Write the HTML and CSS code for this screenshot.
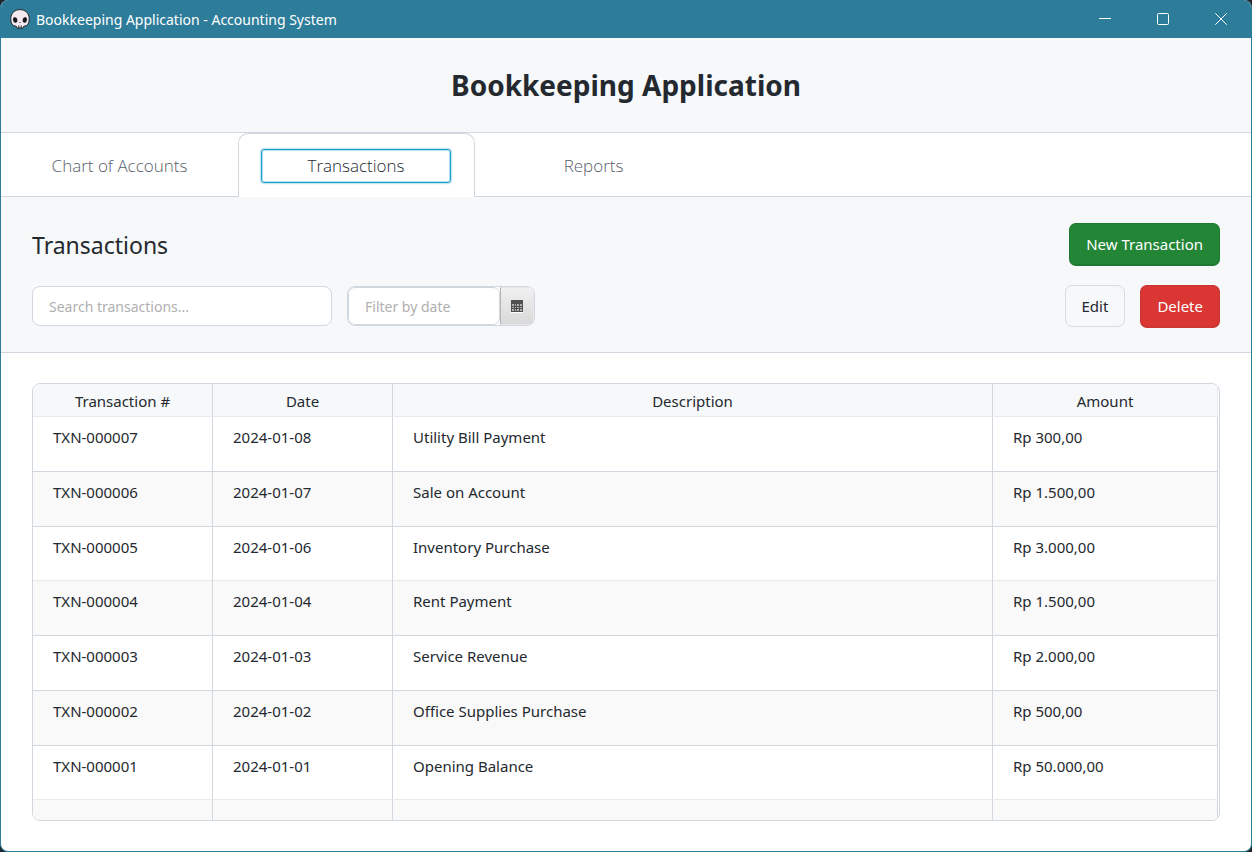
FILE: index.html
```html
<!DOCTYPE html>
<html lang="en">
<head>
<meta charset="utf-8">
<meta name="viewport" content="width=device-width, initial-scale=1">
<title>Bookkeeping Application - Accounting System</title>
<link rel="stylesheet" href="styles.css">
</head>
<body>
<div class="window">
  <div class="titlebar">
    <svg class="app-icon" viewBox="0 0 20 20" aria-hidden="true">
      <path d="M10 .6C4.700.6.8 4.500.8 9.500c0 3.200.6 5.700 2.600 7l3 .9.6 1.700h6l.6-1.700 3-.9c2-1.300 2.600-3.800 2.600-7C19.200 4.500 15.300.6 10 .6z" fill="#f4e9ef" stroke="#25252b" stroke-width="1"/>
      <ellipse cx="5.200" cy="11" rx="2.100" ry="2.800" fill="#18181c" transform="rotate(-12 5.200 11)"/>
      <ellipse cx="14.800" cy="11" rx="2.100" ry="2.800" fill="#18181c" transform="rotate(12 14.800 11)"/>
      <path d="M9.500 14l.5-.8.500.8M8.500 16.500v2.500M10 16.500v2.500M11.500 16.500v2.500" stroke="#25252b" fill="none" stroke-width=".7"/>
    </svg>
    <span class="titlebar-text">Bookkeeping Application - Accounting System</span>
    <button class="window-button" type="button" aria-label="Minimize"><svg viewBox="0 0 12 12"><path d="M0 5.500h12"/></svg></button>
    <button class="window-button" type="button" aria-label="Maximize"><svg viewBox="0 0 12 12"><rect x=".5" y=".5" width="11" height="11" rx="1"/></svg></button>
    <button class="window-button" type="button" aria-label="Close"><svg viewBox="0 0 12 12"><path d="M.3.3l11.400 11.400M11.700.3L.3 11.700"/></svg></button>
  </div>

  <header class="app-header"><h1>Bookkeeping Application</h1></header>

  <div class="tabs" role="tablist">
    <button class="tab" type="button" role="tab" aria-selected="false">Chart of Accounts</button>
    <button class="tab tab-active" type="button" role="tab" aria-selected="true"><span class="tab-focus">Transactions</span></button>
    <button class="tab" type="button" role="tab" aria-selected="false">Reports</button>
  </div>

  <section class="toolbar">
    <div class="toolbar-row">
      <h2>Transactions</h2>
      <button class="button button-primary" type="button">New Transaction</button>
    </div>
    <div class="toolbar-row toolbar-controls">
      <div class="filters">
        <input class="search" type="text" placeholder="Search transactions..." aria-label="Search transactions">
        <div class="date-picker">
          <input class="date-input" type="text" placeholder="Filter by date" aria-label="Filter by date">
          <button class="date-button" type="button" aria-label="Open calendar">
            <svg viewBox="0 0 12 13"><path d="M0 12.500h12" stroke="#fff"/><path d="M0 0h12v12H0z" fill="#505050"/><path d="M1 4h2v2H1zM4 4h1v2H4zM6 4h2v2H6zM9 4h2v2H9zM1 7h2v1H1zM4 7h1v1H4zM6 7h2v1H6zM9 7h2v1H9zM1 9h2v2H1zM4 9h1v2H4zM6 9h2v2H6zM9 9h2v2H9z" fill="#b0b0b0"/></svg>
          </button>
        </div>
      </div>
      <div class="actions">
        <button class="button button-plain" type="button">Edit</button>
        <button class="button button-danger" type="button">Delete</button>
      </div>
    </div>
  </section>

  <main class="content">
    <div class="table-frame">
      <table>
        <colgroup><col class="col-small"><col class="col-small"><col><col class="col-amount"></colgroup>
        <thead><tr><th>Transaction #</th><th>Date</th><th>Description</th><th>Amount</th></tr></thead>
        <tbody>
          <tr><td>TXN-000007</td><td>2024-01-08</td><td>Utility Bill Payment</td><td>Rp 300,00</td></tr>
          <tr><td>TXN-000006</td><td>2024-01-07</td><td>Sale on Account</td><td>Rp 1.500,00</td></tr>
          <tr class="row-soft"><td>TXN-000005</td><td>2024-01-06</td><td>Inventory Purchase</td><td>Rp 3.000,00</td></tr>
          <tr><td>TXN-000004</td><td>2024-01-04</td><td>Rent Payment</td><td>Rp 1.500,00</td></tr>
          <tr><td>TXN-000003</td><td>2024-01-03</td><td>Service Revenue</td><td>Rp 2.000,00</td></tr>
          <tr><td>TXN-000002</td><td>2024-01-02</td><td>Office Supplies Purchase</td><td>Rp 500,00</td></tr>
          <tr class="row-soft"><td>TXN-000001</td><td>2024-01-01</td><td>Opening Balance</td><td>Rp 50.000,00</td></tr>
          <tr><td></td><td></td><td></td><td></td></tr>
        </tbody>
      </table>
    </div>
  </main>
</div>
</body>
</html>
```
FILE: styles.css
```css
* { box-sizing: border-box; }

body {
  margin: 0;
  background: #22262a;
  color: #24292f;
  font-family: "Noto Sans", "Open Sans", sans-serif;
  font-size: 15px;
}

button, input { font: inherit; color: inherit; }
h1, h2 { margin: 0; }

.window {
  display: flex;
  flex-direction: column;
  height: 100vh;
  overflow: hidden;
  background: #fff;
  border: 1px solid #2d7d9a;
  border-top: 0;
  border-radius: 8px;
}

.titlebar {
  display: flex;
  align-items: center;
  flex: none;
  height: 38px;
  padding: 0 1px 0 9px;
  background: #2d7d9a;
  color: #fff;
  font-size: 14px;
}
.app-icon { width: 20px; height: 20px; margin-right: 6px; }
.titlebar-text { flex: 1; }
.window-button {
  display: grid;
  place-items: center;
  width: 58px;
  height: 38px;
  padding: 0;
  border: 0;
  background: none;
}
.window-button svg { width: 12px; height: 12px; fill: none; stroke: #fff; }

.app-header {
  padding: 24px 32px;
  background: #f6f8fa;
  border-bottom: 1px solid #d0d7de;
  text-align: center;
}
h1 { font-size: 28px; line-height: 46px; font-weight: 700; }

.tabs {
  display: flex;
  height: 64px;
  flex: none;
  background: linear-gradient(#d0d7de, #d0d7de) bottom / 100% 1px no-repeat;
}
.tab {
  width: 237px;
  padding: 0 22px;
  border: 0;
  background: none;
  color: #57606a;
  font-family: "Open Sans", "Noto Sans", sans-serif;
  font-size: 17px;
  font-weight: 300;
}
.tab-active {
  padding: 0 23px 0 22px;
  background: #fff;
  border: 1px solid #d0d7de;
  border-bottom: 0;
  border-radius: 10px 10px 0 0;
  color: #24292f;
}
.tab-focus {
  display: block;
  border: 1px solid #1ba1d0;
  border-radius: 3px;
  box-shadow: inset 0 0 0 1px #b5e0f0, 0 0 2px #1ba1d0;
  line-height: 32px;
}

.toolbar {
  display: flex;
  flex-direction: column;
  gap: 19px;
  flex: none;
  padding: 26px 31px 24px;
  background: #f6f8fa;
  border-bottom: 1px solid #d0d7de;
}
.toolbar-row {
  display: flex;
  align-items: center;
  justify-content: space-between;
}
.toolbar-controls { align-items: flex-start; }
h2 { font-size: 23px; line-height: 32px; font-weight: 400; }
.filters { display: flex; gap: 15px; padding-top: 1px; font-size: 14px; }
.actions { display: flex; gap: 15px; }

input::placeholder { color: #b0b0b0; opacity: 1; }
.search {
  width: 300px;
  height: 40px;
  padding: 0 16px;
  border: 1px solid #d0d7de;
  border-radius: 8px;
  background: #fff;
}
.date-picker {
  display: flex;
  width: 188px;
  height: 40px;
  overflow: hidden;
  border: 1px solid #d0d7de;
  border-radius: 8px;
  background: #fff;
}
.date-input {
  width: 152px;
  padding: 0 16px;
  border: 1px solid #d0d7de;
  border-radius: 7px;
  background: #fff;
}
.date-button {
  display: grid;
  place-items: center;
  flex: 1;
  padding: 0;
  border: 1px solid #e8e8e8;
  border-left-color: #b5b5b5;
  background: linear-gradient(#f0f0f0, #d9d9d9);
}
.date-button svg { width: 12px; height: 13px; }

.button {
  height: 43px;
  padding: 0 16px;
  border: 1px solid transparent;
  border-radius: 7px;
}
.button-primary { background: #238636; border-color: #1f7a31; border-bottom-width: 2px; color: #fff; }
.button-danger { background: #da3633; border-color: #cb3532; border-bottom-width: 2px; color: #fff; }
.button-plain { height: 42px; background: #f6f8fa; border-color: #d8dcdf; }

.content {
  display: flex;
  flex: 1;
  min-height: 0;
  padding: 30px 31px;
}
.table-frame {
  flex: 1;
  overflow: hidden;
  padding-right: 1px;
  border: 1px solid #d0d7de;
  border-radius: 8px;
}
table {
  width: 100%;
  table-layout: fixed;
  border-collapse: separate;
  border-spacing: 0;
}
.col-small { width: 180px; }
.col-amount { width: 225px; }
th {
  height: 33px;
  padding: 2px 0 0;
  background: #f6f8fa;
  border-right: 1px solid #d0d7de;
  border-bottom: 1px solid #e6eaee;
  font-weight: 400;
}
th:last-child { border-right-color: #e6eaee; }
td {
  height: 55px;
  padding: 9px 20px;
  border-right: 1px solid #d0d7de;
  border-bottom: 1px solid #d0d7de;
  line-height: 22px;
  vertical-align: top;
}
.row-soft td { height: 54px; border-bottom-color: #e8eaec; }
tbody tr:nth-child(even) { background: #f9f9f9; }
```
